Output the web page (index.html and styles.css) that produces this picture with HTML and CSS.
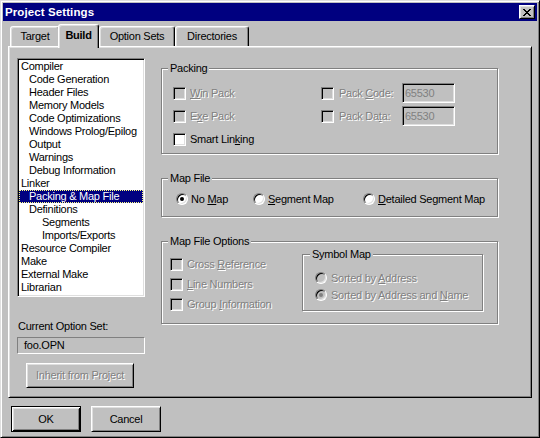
FILE: index.html
```html
<!DOCTYPE html>
<html>
<head>
<meta charset="utf-8">
<title>Project Settings</title>
<link rel="stylesheet" href="styles.css">
</head>
<body>
<div class="window">
  <div class="titlebar">
    <span class="title">Project Settings</span>
    <span class="close"><svg width="8" height="7" viewBox="0 0 8 7" shape-rendering="crispEdges"><path fill="#000" d="M0 0h2v1h-2z M6 0h2v1h-2z M1 1h2v1h-2z M5 1h2v1h-2z M2 2h4v1h-4z M3 3h2v1h-2z M2 4h4v1h-4z M1 5h2v1h-2z M5 5h2v1h-2z M0 6h2v1h-2z M6 6h2v1h-2z"/></svg></span>
  </div>
  <div class="main">
    <div class="tabs">
      <div class="tab t-target">Target</div>
      <div class="tab sel">Build</div>
      <div class="tab t-opt">Option Sets</div>
      <div class="tab t-dir">Directories</div>
    </div>
    <div class="panel">
      <div class="leftcol">
        <div class="list">
          <div class="item">Compiler</div>
          <div class="item l1">Code Generation</div>
          <div class="item l1">Header Files</div>
          <div class="item l1">Memory Models</div>
          <div class="item l1">Code Optimizations</div>
          <div class="item l1">Windows Prolog/Epilog</div>
          <div class="item l1">Output</div>
          <div class="item l1">Warnings</div>
          <div class="item l1">Debug Information</div>
          <div class="item">Linker</div>
          <div class="item l1 sel">Packing &amp; Map File</div>
          <div class="item l1">Definitions</div>
          <div class="item l2">Segments</div>
          <div class="item l2">Imports/Exports</div>
          <div class="item">Resource Compiler</div>
          <div class="item">Make</div>
          <div class="item">External Make</div>
          <div class="item">Librarian</div>
        </div>
        <div class="cur-label">Current Option Set:</div>
        <div class="field">foo.OPN</div>
        <div class="btn inherit dis-text">Inherit from Project</div>
      </div>
      <div class="rightcol">
        <fieldset class="grp">
          <legend>Packing</legend>
          <div class="pk">
            <div class="chk"><span class="cb dis"></span><span class="dis-text"><u>W</u>in Pack</span></div>
            <div class="chk"><span class="cb dis"></span><span class="dis-text lbl">Pack <u>C</u>ode:</span><span class="edit">65530</span></div>
            <div class="chk"><span class="cb dis"></span><span class="dis-text">E<u>x</u>e Pack</span></div>
            <div class="chk"><span class="cb dis"></span><span class="dis-text lbl">Pack Da<u>t</u>a:</span><span class="edit">65530</span></div>
            <div class="chk"><span class="cb"></span><span>Smart Lin<u>k</u>ing</span></div>
          </div>
        </fieldset>
        <fieldset class="grp gap">
          <legend>Map File</legend>
          <div class="radios">
            <div class="ropt w-no"><span class="rb on"></span><span>No <u>M</u>ap</span></div>
            <div class="ropt w-seg"><span class="rb"></span><span><u>S</u>egment Map</span></div>
            <div class="ropt"><span class="rb"></span><span><u>D</u>etailed Segment Map</span></div>
          </div>
        </fieldset>
        <fieldset class="grp gap">
          <legend>Map File Options</legend>
          <div class="mfo">
            <div class="mfo-checks">
              <div class="chk row20"><span class="cb dis"></span><span class="dis-text">Cross <u>R</u>eference</span></div>
              <div class="chk row20"><span class="cb dis"></span><span class="dis-text"><u>L</u>ine Numbers</span></div>
              <div class="chk row20"><span class="cb dis"></span><span class="dis-text">Group <u>I</u>nformation</span></div>
            </div>
            <fieldset class="grp sym">
              <legend>Symbol Map</legend>
              <div class="sym-rows">
                <div class="ropt sopt"><span class="rb dis"></span><span class="dis-text">Sorted by <u>A</u>ddress</span></div>
                <div class="ropt sopt"><span class="rb dis on"></span><span class="dis-text">Sorted by Address and <u>N</u>ame</span></div>
              </div>
            </fieldset>
          </div>
        </fieldset>
      </div>
    </div>
    <div class="footer">
      <div class="btn default">OK</div>
      <div class="btn">Cancel</div>
    </div>
  </div>
</div>
</body>
</html>
```
FILE: styles.css
```css
* { box-sizing: border-box; }
html, body { margin: 0; padding: 0; }
body {
  width: 540px;
  height: 438px;
  overflow: hidden;
  background: #c0c0c0;
  font-family: "Liberation Sans", Arial, sans-serif;
  font-size: 11px;
  letter-spacing: -0.25px;
  color: #000;
}
.window {
  width: 540px;
  height: 438px;
  padding: 2px;
  background: #c0c0c0;
  border: 1px solid;
  border-color: #dfdfdf #000 #000 #dfdfdf;
  box-shadow: inset 1px 1px #fff, inset -1px -1px #808080;
}
.titlebar {
  height: 18px;
  background: #000080;
  display: flex;
  align-items: center;
  padding-left: 2px;
}
.title {
  color: #fff;
  font-weight: bold;
  font-size: 11.5px;
  letter-spacing: 0.1px;
  line-height: 18px;
}
.close {
  margin-left: auto;
  margin-right: 2px;
  width: 16px;
  height: 14px;
  background: #c0c0c0;
  border: 1px solid;
  border-color: #fff #000 #000 #fff;
  box-shadow: inset 1px 1px #dfdfdf, inset -1px -1px #808080;
  display: flex;
  align-items: center;
  justify-content: center;
}
.close svg { display: block; }
.main { padding: 0 5px; }
.tabs {
  display: flex;
  align-items: flex-end;
  height: 22px;
  margin-top: 3px;
  padding-left: 2px;
}
.tab {
  height: 20px;
  border: 1px solid;
  border-bottom: none;
  border-color: #fff #000 transparent #fff;
  border-radius: 3px 3px 0 0;
  box-shadow: inset -1px 0 #808080, inset 1px 1px #dfdfdf;
  display: flex;
  align-items: center;
  justify-content: center;
  line-height: 13px;
  background: #c0c0c0;
}
.t-target { width: 50px; }
.tab.sel {
  width: 41px;
  height: 24px;
  margin: 0 0 -2px -2px;
  padding-bottom: 2px;
  font-weight: bold;
  position: relative;
  z-index: 1;
}
.t-opt { width: 76px; }
.t-dir { width: 74px; }
.panel {
  height: 352px;
  border: 1px solid;
  border-color: #fff #000 #000 #fff;
  box-shadow: inset 1px 1px #dfdfdf, inset -1px -1px #808080;
  display: flex;
  gap: 16px;
  padding: 11px 0 0 8px;
}
.leftcol { width: 128px; display: flex; flex-direction: column; }
.list {
  width: 128px;
  height: 239px;
  background: #fff;
  border: 1px solid;
  border-color: #808080 #fff #fff #808080;
  box-shadow: inset 1px 1px #000, inset -1px -1px #dfdfdf;
  padding: 1px;
  overflow: hidden;
}
.item {
  height: 13px;
  line-height: 13px;
  white-space: nowrap;
  padding-left: 2px;
}
.item.l1 { padding-left: 10px; }
.item.l2 { padding-left: 23px; }
.item.sel {
  background: #000080;
  color: #fff;
  outline: 1px dotted #ffff80;
  outline-offset: -1px;
}
.cur-label {
  margin-top: 23px;
  height: 13px;
  line-height: 13px;
  padding-left: 1px;
}
.field {
  margin-top: 4px;
  height: 17px;
  border: 1px solid;
  border-color: #808080 #fff #fff #808080;
  line-height: 15px;
  padding-left: 6px;
}
.btn {
  width: 70px;
  height: 26px;
  border: 1px solid;
  border-color: #fff #000 #000 #fff;
  box-shadow: inset 1px 1px #dfdfdf, inset -1px -1px #808080;
  display: flex;
  align-items: center;
  justify-content: center;
  line-height: 13px;
}
.btn.default {
  border-color: #000;
  box-shadow: inset 1px 1px #fff, inset -1px -1px #000, inset 2px 2px #dfdfdf, inset -2px -2px #808080;
}
.btn.inherit {
  width: 108px;
  height: 25px;
  margin: 9px 0 0 9px;
}
.dis-text {
  color: #808080;
  text-shadow: 1px 1px 0 #fff;
}
.rightcol { width: 337px; margin-top: 4px; }
fieldset.grp {
  margin: 0;
  padding: 0;
  min-width: 0;
  border: 1px solid #808080;
  box-shadow: inset 1px 1px #fff, 1px 1px #fff;
}
fieldset.grp.gap { margin-top: 18px; }
legend {
  padding: 0 2px;
  margin-left: 6px;
  line-height: 13px;
  background: #c0c0c0;
}
.pk {
  display: grid;
  grid-template-columns: 148px auto;
  grid-auto-rows: 20px;
  row-gap: 3px;
  padding: 8px 0 4px 11px;
}
.chk {
  display: flex;
  align-items: center;
  gap: 4px;
  white-space: nowrap;
}
.cb {
  flex: none;
  width: 13px;
  height: 13px;
  background: #fff;
  border: 1px solid;
  border-color: #808080 #fff #fff #808080;
  box-shadow: inset 1px 1px #000, inset -1px -1px #dfdfdf;
}
.cb.dis { background: #c0c0c0; }
.chk .lbl { width: 59px; margin-left: 1px; }
.edit {
  width: 53px;
  height: 20px;
  border: 1px solid;
  border-color: #808080 #fff #fff #808080;
  box-shadow: inset 1px 1px #000, inset -1px -1px #dfdfdf;
  background: #c0c0c0;
  color: #808080;
  padding-left: 2px;
  line-height: 18px;
}
.radios {
  display: flex;
  padding: 6px 0 9px 14px;
}
.ropt {
  display: flex;
  align-items: center;
  gap: 3px;
  height: 16px;
  white-space: nowrap;
}
.w-no { width: 77px; }
.w-seg { width: 110px; }
.rb {
  flex: none;
  position: relative;
  width: 12px;
  height: 12px;
  border-radius: 50%;
  background: #fff;
  border: 1px solid;
  border-color: #808080 #fff #fff #808080;
  box-shadow: inset 1px 1px #000, inset -1px -1px #dfdfdf;
}
.rb.on::after {
  content: "";
  position: absolute;
  left: 3px;
  top: 3px;
  width: 4px;
  height: 4px;
  border-radius: 50%;
  background: #000;
}
.rb.dis { background: #c0c0c0; }
.rb.dis.on::after { background: #808080; }
.mfo {
  display: flex;
  align-items: flex-start;
  padding: 0 0 9px 8px;
}
.mfo-checks { width: 132px; margin-top: 6px; }
.row20 { height: 20px; }
fieldset.grp.sym { width: 181px; }
.sym legend { margin-left: 7px; }
.sym-rows {
  display: flex;
  flex-direction: column;
  gap: 1px;
  padding: 9px 0 7px 12px;
}
.sopt { gap: 4px; }
.footer {
  display: flex;
  gap: 10px;
  margin-top: 8px;
  padding-left: 3px;
}
```
